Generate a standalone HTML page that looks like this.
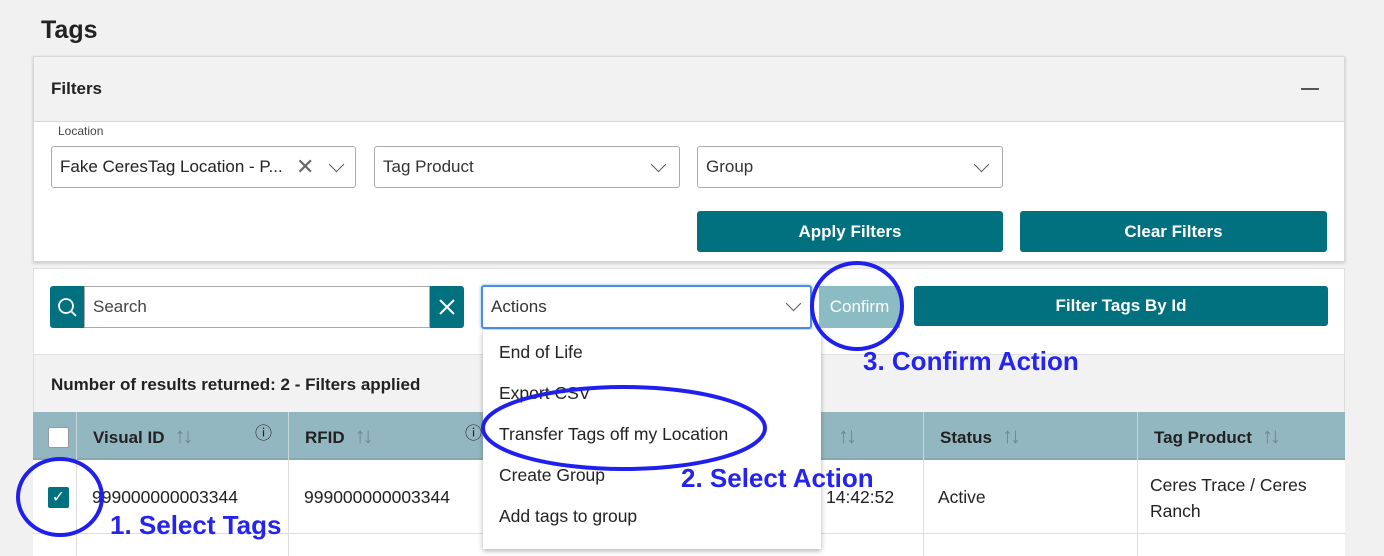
<!DOCTYPE html>
<html><head><meta charset="utf-8"><style>
*{box-sizing:border-box;margin:0;padding:0}
body{width:1384px;height:556px;background:#f1f1f1;font-family:"Liberation Sans",sans-serif;color:#222;position:relative;overflow:hidden}
.a{position:absolute}
.sel{position:absolute;background:#fff;border:1px solid #aaa;border-radius:3px;height:42px;font-size:17px;line-height:40px;padding-left:8px;color:#333}
.btn{position:absolute;background:#02717f;color:#fff;font-size:17px;font-weight:bold;text-align:center;border-radius:3px}
.chev{position:absolute;top:12px;width:11px;height:11px;border-right:1.6px solid #555;border-bottom:1.6px solid #555;transform:rotate(45deg)}
.th{position:absolute;top:412px;height:48px;line-height:48px;font-size:17px;font-weight:bold;color:#222;padding-left:16px;border-left:1px solid #c8d7db}
.sort{color:#6b8a92;font-weight:normal;margin-left:10px;font-size:22px;letter-spacing:-3px}
.mi{position:absolute;left:499px;font-size:17.5px;color:#222}
.blue{position:absolute;color:#2424ee;font-weight:bold;font-size:26px}
.cell{position:absolute;font-size:17.5px}
</style></head><body>
<div class="a" style="left:41px;top:16px;font-size:25px;font-weight:bold">Tags</div>
<div class="a" style="left:33px;top:56px;width:1312px;height:206px;background:#fff;border:1px solid #d8d8d8;box-shadow:0 1px 3px rgba(0,0,0,.2)"></div>
<div class="a" style="left:34px;top:57px;width:1310px;height:65px;background:#f2f2f2;border-bottom:1px solid #d6d6d6"></div>
<div class="a" style="left:51px;top:79px;font-size:17px;font-weight:bold">Filters</div>
<div class="a" style="left:1301px;top:88px;width:18px;height:2px;background:#555"></div>
<div class="a" style="left:58px;top:124px;font-size:12px;color:#444">Location</div>
<div class="sel" style="left:51px;top:146px;width:305px;color:#222">Fake CeresTag Location - P...<span class="a" style="left:244px;top:0;font-size:22px;color:#666">✕</span><div class="chev" style="left:279px"></div></div>
<div class="sel" style="left:374px;top:146px;width:306px">Tag Product<div class="chev" style="left:278px"></div></div>
<div class="sel" style="left:697px;top:146px;width:306px">Group<div class="chev" style="left:278px"></div></div>
<div class="btn" style="left:697px;top:211px;width:306px;height:41px;line-height:41px">Apply Filters</div>
<div class="btn" style="left:1020px;top:211px;width:307px;height:41px;line-height:41px">Clear Filters</div>
<div class="a" style="left:33px;top:268px;width:1312px;height:87px;background:#fff;border:1px solid #e0e0e0"></div>
<div class="a" style="left:50px;top:286px;width:414px;height:42px;background:#02717f;border-radius:3px"></div>
<svg class="a" style="left:56px;top:296px" width="22" height="22" viewBox="0 0 22 22"><circle cx="10" cy="10" r="7" fill="none" stroke="#fff" stroke-width="1.8"/><path d="M15 15l5 5" stroke="#fff" stroke-width="1.8"/></svg>
<div class="a" style="left:84px;top:286px;width:346px;height:42px;background:#fff;border:1px solid #aaa;font-size:17px;line-height:40px;padding-left:8px;color:#444">Search</div>
<svg class="a" style="left:438px;top:298px" width="18" height="18"><path d="M2 2L16 16M16 2L2 16" stroke="#fff" stroke-width="2"/></svg>
<div class="sel" style="left:481px;top:285px;width:331px;height:44px;border:2px solid #4c8fe0;box-shadow:0 0 3px #8ab8f0">Actions<div class="chev" style="left:305px;top:11px"></div></div>
<div class="a" style="left:819px;top:286px;width:81px;height:42px;background:#8bbcc3;color:#fff;font-size:17px;line-height:42px;text-align:center">Confirm</div>
<div class="btn" style="left:914px;top:286px;width:414px;height:40px;line-height:40px">Filter Tags By Id</div>
<div class="a" style="left:33px;top:355px;width:1312px;height:57px;background:#f2f2f2;border-left:1px solid #ddd;border-right:1px solid #ddd"></div>
<div class="a" style="left:51px;top:375px;font-size:17px;font-weight:bold">Number of results returned: 2 - Filters applied</div>
<div class="a" style="left:33px;top:412px;width:1312px;height:48px;background:#93b7c0;border-bottom:2px solid #8aa"></div>
<div class="a" style="left:33px;top:460px;width:1312px;height:96px;background:#fff"></div>
<div class="a" style="left:33px;top:533px;width:1312px;height:1px;background:#ddd"></div>
<div class="a" style="left:48px;top:427px;width:21px;height:21px;background:#fff;border:1px solid #999;border-radius:2px"></div>
<div class="th" style="left:76px;width:212px">Visual ID<span class="sort">↑↓</span><span class="a" style="left:178px;top:-2px;font-weight:normal;font-size:17px">ⓘ</span></div>
<div class="th" style="left:288px;width:420px">RFID<span class="sort">↑↓</span><span class="a" style="left:176px;top:-2px;font-weight:normal;font-size:17px">ⓘ</span></div>
<div class="th" style="left:812px;width:111px;border:none"><span class="sort">↑↓</span></div>
<div class="th" style="left:923px;width:214px">Status<span class="sort">↑↓</span></div>
<div class="th" style="left:1137px;width:208px">Tag Product<span class="sort">↑↓</span></div>
<div class="a" style="left:76px;top:460px;width:1px;height:96px;background:#ddd"></div>
<div class="a" style="left:288px;top:460px;width:1px;height:96px;background:#ddd"></div>
<div class="a" style="left:923px;top:460px;width:1px;height:96px;background:#ddd"></div>
<div class="a" style="left:1137px;top:460px;width:1px;height:96px;background:#ddd"></div>
<div class="a" style="left:48px;top:487px;width:21px;height:21px;background:#02717f;border-radius:2px;color:#fff;font-size:16px;text-align:center;line-height:21px">✓</div>
<div class="cell" style="left:92px;top:487px">999000000003344</div>
<div class="cell" style="left:304px;top:487px">999000000003344</div>
<div class="cell" style="left:826px;top:487px">14:42:52</div>
<div class="cell" style="left:938px;top:487px">Active</div>
<div class="cell" style="left:1150px;top:472px;line-height:26px">Ceres Trace / Ceres<br>Ranch</div>
<div class="a" style="left:483px;top:330px;width:338px;height:219px;background:#fff;box-shadow:0 2px 5px rgba(0,0,0,.3)"></div>
<div class="mi" style="top:342px">End of Life</div>
<div class="mi" style="top:383px">Export CSV</div>
<div class="mi" style="top:424px">Transfer Tags off my Location</div>
<div class="mi" style="top:465px">Create Group</div>
<div class="mi" style="top:506px">Add tags to group</div>
<svg class="a" style="left:0;top:0" width="1384" height="556">
<g fill="none" stroke="#2020ee" stroke-width="4">
<ellipse cx="60" cy="497" rx="42" ry="38"/>
<ellipse cx="624" cy="428" rx="141" ry="41"/>
<ellipse cx="857" cy="306" rx="45" ry="43"/>
</g></svg>
<div class="blue" style="left:110px;top:510px">1. Select Tags</div>
<div class="blue" style="left:681px;top:463px">2. Select Action</div>
<div class="blue" style="left:863px;top:346px">3. Confirm Action</div>
</body></html>
